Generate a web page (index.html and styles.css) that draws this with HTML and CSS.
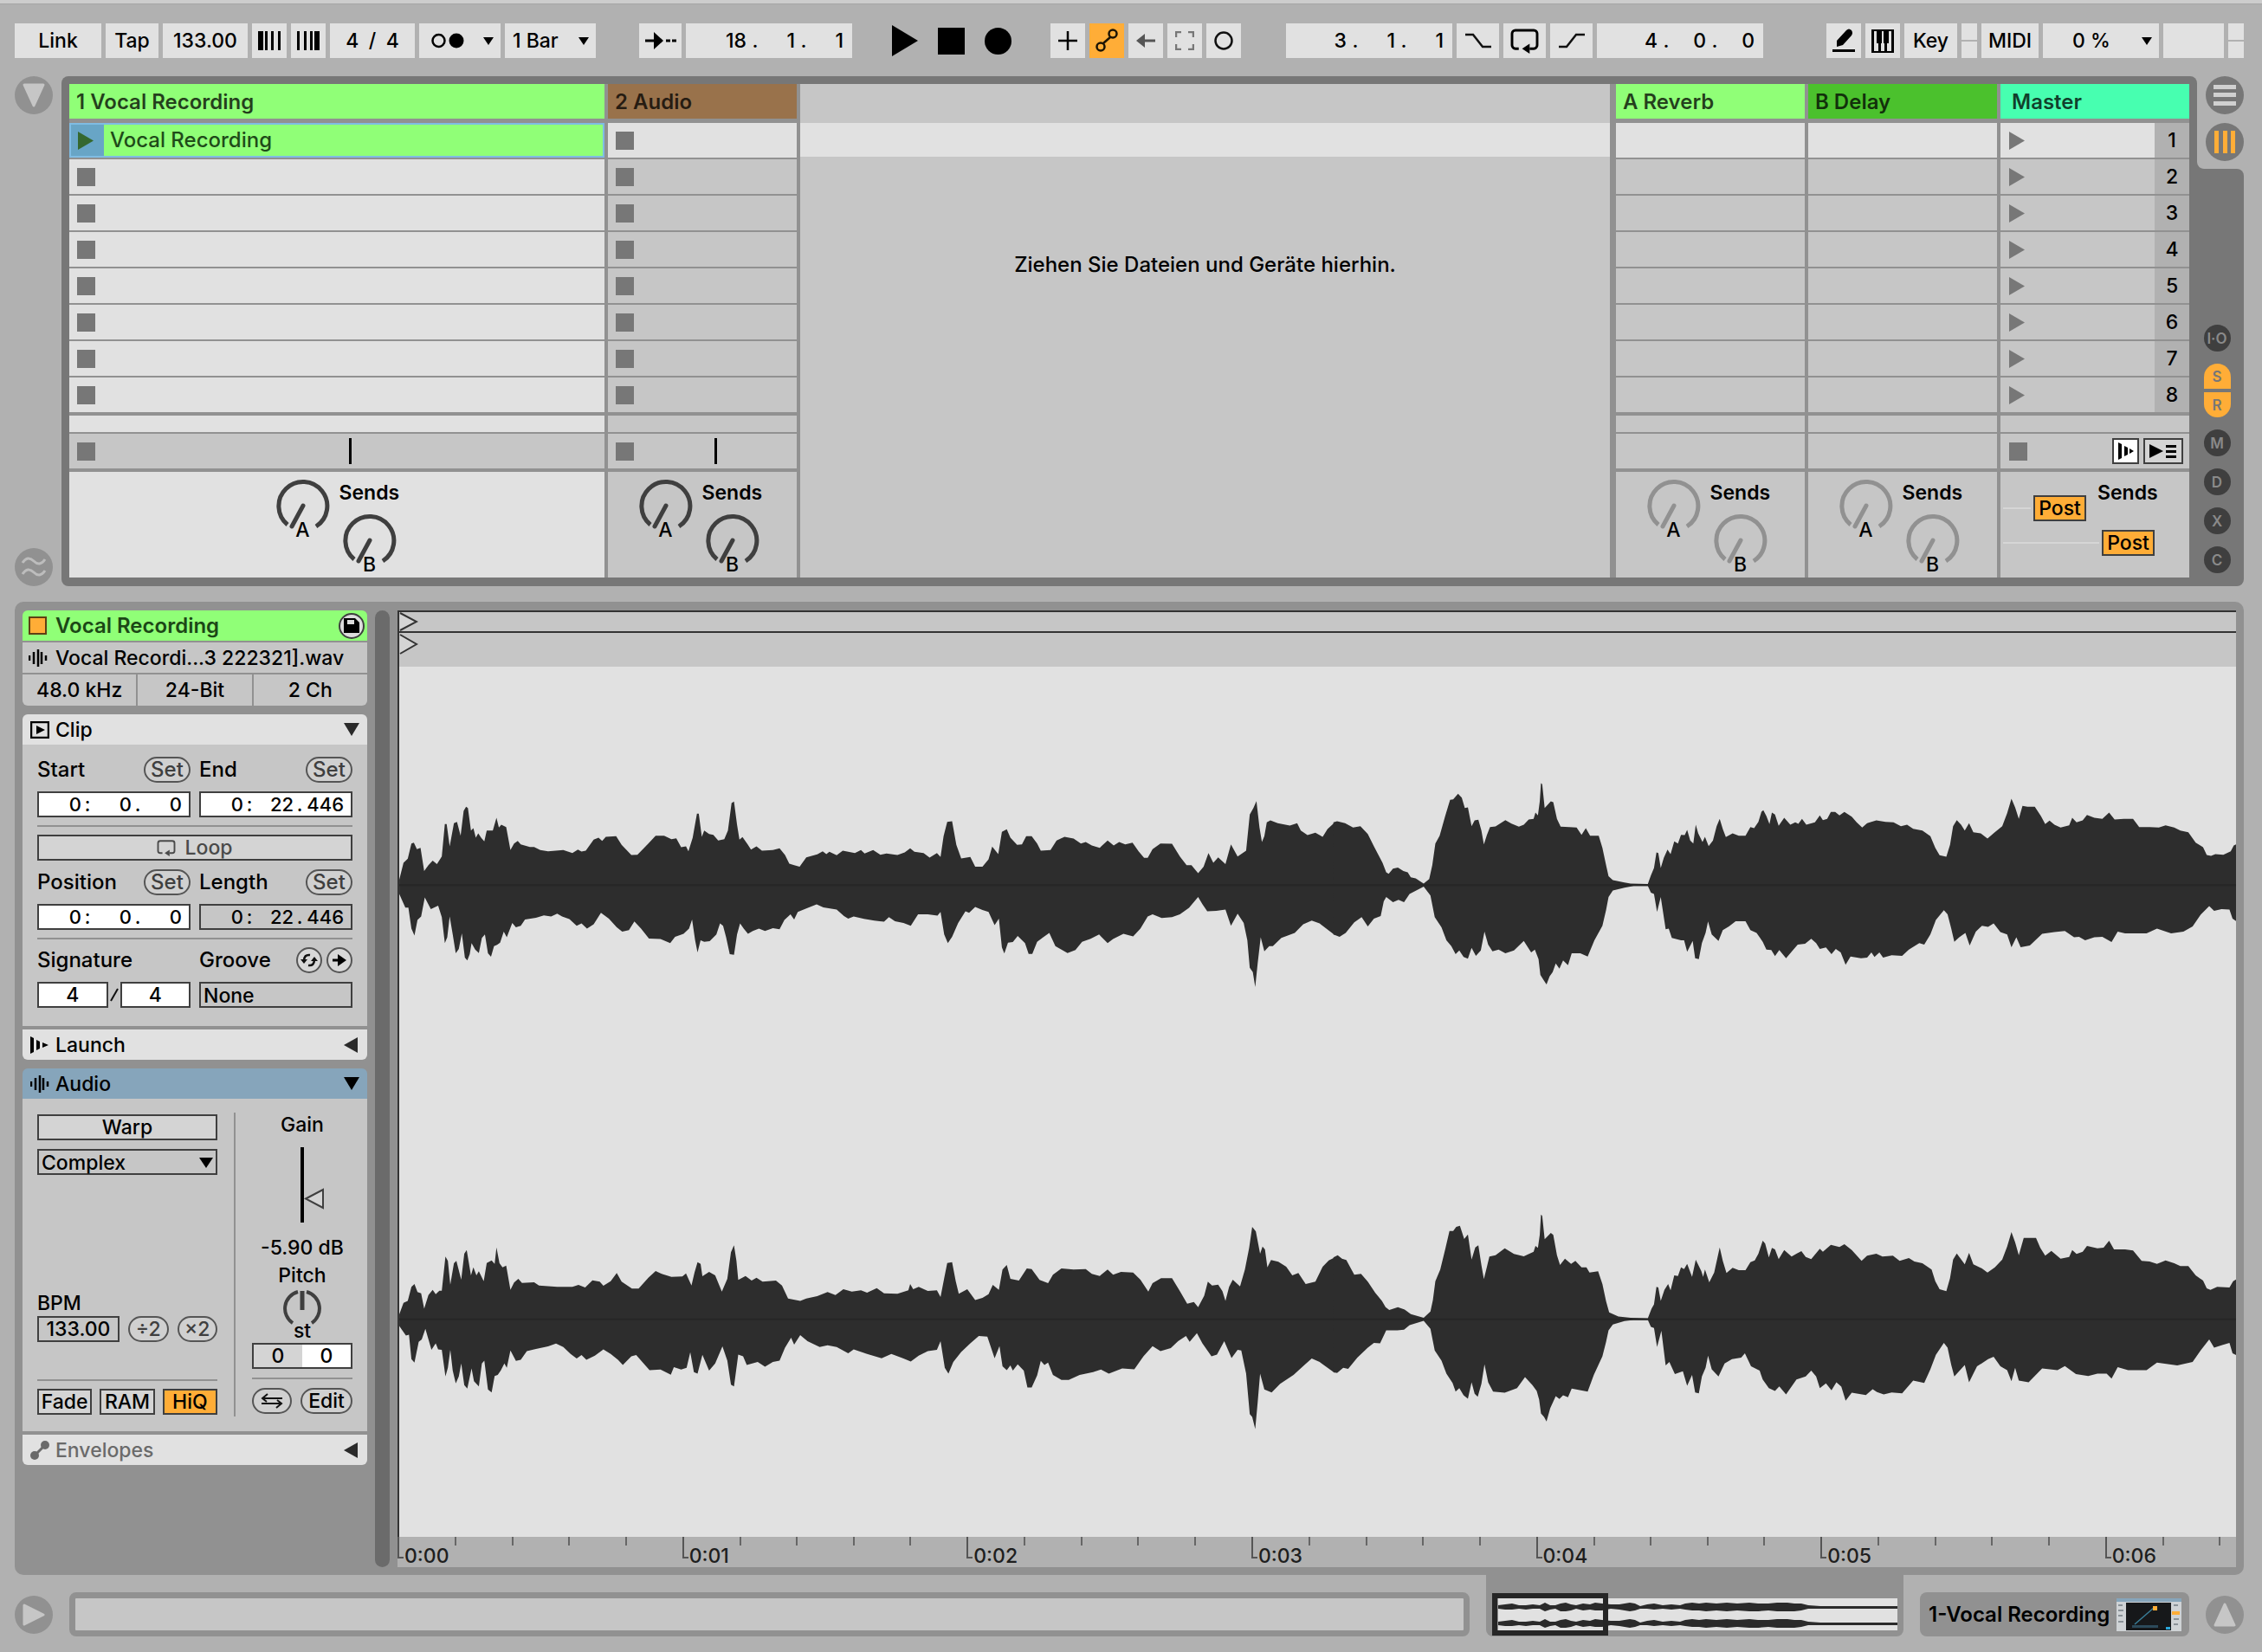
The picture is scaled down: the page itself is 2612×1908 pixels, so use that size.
FILE: index.html
```html
<!DOCTYPE html>
<html lang="de">
<head>
<meta charset="utf-8">
<title>Vocal Recording</title>
<link rel="stylesheet" href="styles.css">
</head>
<body>
<svg class="defs" aria-hidden="true">
  <symbol id="i-play" viewBox="0 0 18 21"><path d="M0 0 18 10.500 0 21z" fill="currentColor"/></symbol>
  <symbol id="i-down" viewBox="0 0 18 15"><path d="M0 0h18L9 15z" fill="currentColor"/></symbol>
  <symbol id="i-left" viewBox="0 0 16 18"><path d="M16 0v18L0 9z" fill="currentColor"/></symbol>
  <symbol id="i-wave" viewBox="0 0 22 22"><path d="M1 8v6M6 4v14M11 1v20M15 4v14M20 8v6" stroke="currentColor" stroke-width="2.500" fill="none"/></symbol>
  <symbol id="i-launch" viewBox="0 0 22 20"><path d="M0 0l4 2v16l-4 2zM7 4l4 2v8l-4 2zM14 7l7 3-7 3z" fill="currentColor"/></symbol>
  <symbol id="i-loop" viewBox="0 0 34 30"><path d="M10 24H6a4 4 0 0 1-4-4V6a4 4 0 0 1 4-4h22a4 4 0 0 1 4 4v14a4 4 0 0 1-4 4h-5" fill="none" stroke="currentColor" stroke-width="3"/><path d="M14 24l9-6v12z" fill="currentColor"/></symbol>
  <symbol id="i-knob" viewBox="0 0 62 58"><path d="M13 53A28 28 0 1 1 46 55" fill="none" stroke="currentColor" stroke-width="5"/><path d="M31 31 18 55" stroke="currentColor" stroke-width="5" stroke-linecap="round"/></symbol>
</svg>

<header class="toolbar">
  <div class="group">
    <button class="w-link">Link</button><button class="w-tap">Tap</button>
    <input class="w-98" value="133.00" aria-label="Tempo">
    <button class="w-40" aria-label="Nudge down"><svg width="26" height="22"><path d="M0 0h6v22H0zM8 0h3v22H8zM15 0h3v22h-3zM23 0h3v22h-3z"/></svg></button>
    <button class="w-40" aria-label="Nudge up"><svg width="26" height="22"><path d="M0 0h3v22H0zM8 0h3v22H8zM15 0h3v22h-3zM20 0h6v22h-6z"/></svg></button>
    <div class="w-98 sig"><input value="4" aria-label="Numerator"><span>/</span><input value="4" aria-label="Denominator"></div>
    <button class="w-94 drop" aria-label="Metronome"><svg width="38" height="18"><circle cx="8.500" cy="9" r="7" fill="none" stroke="#000" stroke-width="2.500"/><circle cx="29" cy="9" r="8.500"/></svg><svg width="12" height="9"><path d="M0 0h12L6 9z"/></svg></button>
    <div class="w-105 select"><select aria-label="Quantization"><option>1 Bar</option></select><svg width="12" height="9"><path d="M0 0h12L6 9z"/></svg></div>
  </div>
  <div class="group g-pos">
    <button class="w-49" aria-label="Follow"><svg width="36" height="20"><path d="M0 10h14M24 10h5M31 10h5" stroke="#000" stroke-width="3"/><path d="M10 0l11 10-11 10z"/></svg></button>
    <div class="time w-192"><input value="18" aria-label="Bar"><span>.</span><input value="1" aria-label="Beat"><span>.</span><input value="1" aria-label="Sixteenth"></div>
  </div>
  <div class="transport">
    <button aria-label="Play"><svg width="30" height="36"><path d="M0 0 30 18 0 36z"/></svg></button>
    <button aria-label="Stop"><svg width="31" height="31"><path d="M0 0h31v31H0z"/></svg></button>
    <button aria-label="Record"><svg width="31" height="31"><circle cx="15.500" cy="15.500" r="15.500"/></svg></button>
  </div>
  <div class="group g-auto">
    <button class="w-40" aria-label="Overdub"><svg width="22" height="22"><path d="M0 11h22M11 0v22" stroke="#000" stroke-width="2.500"/></svg></button>
    <button class="w-40 on" aria-label="Automation arm"><svg width="26" height="28" fill="none" stroke="#1c1404" stroke-width="2.500"><circle cx="6" cy="21" r="4.500"/><circle cx="20" cy="6" r="4.500"/><path d="M9 17 17 10"/></svg></button>
    <button class="w-40 dim" aria-label="Re-enable automation"><svg width="22" height="18"><path d="M8 9h14" stroke="#555" stroke-width="3"/><path d="M0 9 10 1v16z" fill="#555"/></svg></button>
    <button class="w-40" aria-label="Capture"><svg width="22" height="22" fill="none" stroke="#777" stroke-width="2.500"><path d="M1 7V1h6M15 1h6v6M21 15v6h-6M7 21H1v-6"/></svg></button>
    <button class="w-40" aria-label="Session record"><svg width="24" height="24"><circle cx="12" cy="12" r="9.500" fill="none" stroke="#111" stroke-width="2.500"/></svg></button>
  </div>
  <div class="group g-loop">
    <div class="time w-192"><input value="3" aria-label="Loop bar"><span>.</span><input value="1" aria-label="Loop beat"><span>.</span><input value="1" aria-label="Loop sixteenth"></div>
    <button class="w-49" aria-label="Punch in"><svg width="32" height="18"><path d="M1 2h9l11 14h10" fill="none" stroke="#111" stroke-width="2.500"/></svg></button>
    <button class="w-49" aria-label="Loop"><svg width="33" height="29"><use href="#i-loop"/></svg></button>
    <button class="w-49" aria-label="Punch out"><svg width="32" height="18"><path d="M1 16h9L21 2h10" fill="none" stroke="#111" stroke-width="2.500"/></svg></button>
    <div class="time w-192"><input value="4" aria-label="Length bars"><span>.</span><input value="0" aria-label="Length beats"><span>.</span><input value="0" aria-label="Length sixteenths"></div>
  </div>
  <div class="group g-right">
    <button class="w-40" aria-label="Draw mode"><svg width="26" height="28"><path d="M0 24h26v3H0zM5 21V14L16 2q3-3 6 0 2 3 0 6L12 19z"/></svg></button>
    <button class="w-40" aria-label="Computer keyboard"><svg width="26" height="27"><path d="M0 0h26v27H0z"/><path d="M3 2h3v14h2v9H3zM11 16h1V2h2v14h1v9h-4zM20 2h3v23h-5v-9h2z" fill="#e1e1e1"/></svg></button>
    <button class="w-tap">Key</button>
    <div class="leds"><i></i><i></i></div>
    <button class="w-midi">MIDI</button>
    <button class="w-cpu drop"><span>0 %</span><svg width="12" height="9"><path d="M0 0h12L6 9z"/></svg></button>
    <div class="w-70"></div>
    <div class="leds"><i></i><i></i></div>
  </div>
</header>

<main>
<section class="session">
  <div class="side">
    <button class="round" aria-label="Browser"><svg width="26" height="28"><path d="M2 2h22L13 26z" fill="#c6c6c6" stroke="#c6c6c6" stroke-width="3" stroke-linejoin="round"/></svg></button>
    <button class="round" aria-label="Groove pool"><svg width="30" height="28" fill="none" stroke="#bdbdbd" stroke-width="3"><path d="M2 9q6-9 13-2t13-2M2 22q6-9 13-2t13-2"/></svg></button>
  </div>
  <div class="frame">
    <div class="track wide sel">
      <h2 class="c-green">1 Vocal Recording</h2>
      <div class="slots">
        <div class="clip"><button aria-label="Launch clip"><svg width="18" height="21"><use href="#i-play"/></svg></button><span>Vocal Recording</span></div>
        <div><b></b></div><div><b></b></div><div><b></b></div><div><b></b></div><div><b></b></div><div><b></b></div><div><b></b></div>
      </div>
      <div class="thin"></div>
      <div class="stop"><b></b><i></i></div>
      <div class="sends">
        <div class="knob"><svg width="62" height="58"><use href="#i-knob"/></svg><span>A</span></div>
        <div><h3>Sends</h3><div class="knob"><svg width="62" height="58"><use href="#i-knob"/></svg><span>B</span></div></div>
      </div>
    </div>
    <div class="track">
      <h2 class="c-brown">2 Audio</h2>
      <div class="slots">
        <div><b></b></div><div><b></b></div><div><b></b></div><div><b></b></div><div><b></b></div><div><b></b></div><div><b></b></div><div><b></b></div>
      </div>
      <div class="thin"></div>
      <div class="stop"><b></b><i></i></div>
      <div class="sends">
        <div class="knob"><svg width="62" height="58"><use href="#i-knob"/></svg><span>A</span></div>
        <div><h3>Sends</h3><div class="knob"><svg width="62" height="58"><use href="#i-knob"/></svg><span>B</span></div></div>
      </div>
    </div>
    <div class="dropzone"><p>Ziehen Sie Dateien und Geräte hierhin.</p></div>
    <div class="track return">
      <h2 class="c-green">A Reverb</h2>
      <div class="slots"><div></div><div></div><div></div><div></div><div></div><div></div><div></div><div></div></div>
      <div class="thin"></div><div class="stop"></div>
      <div class="sends">
        <div class="knob"><svg width="62" height="58"><use href="#i-knob"/></svg><span>A</span></div>
        <div><h3>Sends</h3><div class="knob"><svg width="62" height="58"><use href="#i-knob"/></svg><span>B</span></div></div>
      </div>
    </div>
    <div class="track return">
      <h2 class="c-forest">B Delay</h2>
      <div class="slots"><div></div><div></div><div></div><div></div><div></div><div></div><div></div><div></div></div>
      <div class="thin"></div><div class="stop"></div>
      <div class="sends">
        <div class="knob"><svg width="62" height="58"><use href="#i-knob"/></svg><span>A</span></div>
        <div><h3>Sends</h3><div class="knob"><svg width="62" height="58"><use href="#i-knob"/></svg><span>B</span></div></div>
      </div>
    </div>
    <div class="track master">
      <h2 class="c-mint">Master</h2>
      <div class="slots">
        <div><svg width="18" height="21"><use href="#i-play"/></svg><span>1</span></div>
        <div><svg width="18" height="21"><use href="#i-play"/></svg><span>2</span></div>
        <div><svg width="18" height="21"><use href="#i-play"/></svg><span>3</span></div>
        <div><svg width="18" height="21"><use href="#i-play"/></svg><span>4</span></div>
        <div><svg width="18" height="21"><use href="#i-play"/></svg><span>5</span></div>
        <div><svg width="18" height="21"><use href="#i-play"/></svg><span>6</span></div>
        <div><svg width="18" height="21"><use href="#i-play"/></svg><span>7</span></div>
        <div><svg width="18" height="21"><use href="#i-play"/></svg><span>8</span></div>
      </div>
      <div class="thin"></div>
      <div class="stop"><b></b>
        <button class="box white" aria-label="Launch"><svg width="18" height="20"><path d="M0 0l4 2v16l-4 2zM7 4l4 2v8l-4 2zM13 7l5 3-5 3z"/></svg></button>
        <button class="box" aria-label="Back to arrangement"><svg width="32" height="16"><path d="M0 0l16 8-16 8zM19 1h12v3H19zM19 7h12v3H19zM19 13h12v3H19z"/></svg></button>
      </div>
      <div class="posts">
        <h3>Sends</h3>
        <div><i></i><button class="box on">Post</button></div>
        <div class="p2"><i></i><button class="box on">Post</button></div>
      </div>
    </div>
  </div>
  <div class="rail">
    <div class="views">
      <button class="round dark" aria-label="Arrangement view"><svg width="26" height="24"><path d="M0 0h26v5H0zM0 9h26v5H0zM0 19h26v5H0z" fill="#d0d0d0"/></svg></button>
      <button class="round dark" aria-label="Session view"><svg width="24" height="26"><path d="M0 0h5v26H0zM10 0h5v26h-5zM19 0h5v26h-5z" fill="#ffad37"/></svg></button>
    </div>
    <div class="toggles">
      <button>I·O</button>
      <div class="pair"><button class="on">S</button><button class="on">R</button></div>
      <button>M</button><button>D</button><button>X</button><button>C</button>
    </div>
  </div>
</section>

<section class="detail">
  <aside>
    <div class="clipbox">
      <h2 class="c-green"><i class="active"></i>Vocal Recording<button class="save" aria-label="Save"><svg width="18" height="17"><path d="M0 0h13l5 5v12H0z"/><path d="M4 2h8v5H4z" fill="#ddd"/></svg></button></h2>
      <p><svg width="22" height="22"><use href="#i-wave"/></svg>Vocal Recordi...3 222321].wav</p>
      <div class="info"><span>48.0 kHz</span><span>24-Bit</span><span>2 Ch</span></div>
    </div>

    <div class="panel">
      <h3><svg width="22" height="20"><path d="M1 1h20v18H1z" fill="none" stroke="#000" stroke-width="2.500"/><path d="M7 5l10 5-10 5z"/></svg>Clip<svg class="fold" width="18" height="15"><use href="#i-down"/></svg></h3>
      <div class="body">
        <div class="two">
          <div class="lab"><span>Start</span><button class="pill">Set</button></div>
          <div class="lab"><span>End</span><button class="pill">Set</button></div>
        </div>
        <div class="two">
          <div class="time field"><input value="0" aria-label="Start min"><span>:</span><input value="0" aria-label="Start s"><span>.</span><input value="0" aria-label="Start ms"></div>
          <div class="time field"><input value="0" aria-label="End min"><span>:</span><input value="22" aria-label="End s"><span>.</span><input value="446" aria-label="End ms"></div>
        </div>
        <hr>
        <button class="box gray"><svg width="22" height="19"><use href="#i-loop"/></svg>Loop</button>
        <div class="two">
          <div class="lab"><span>Position</span><button class="pill">Set</button></div>
          <div class="lab"><span>Length</span><button class="pill">Set</button></div>
        </div>
        <div class="two">
          <div class="time field"><input value="0" aria-label="Position min"><span>:</span><input value="0" aria-label="Position s"><span>.</span><input value="0" aria-label="Position ms"></div>
          <div class="time field off"><input value="0" aria-label="Length min"><span>:</span><input value="22" aria-label="Length s"><span>.</span><input value="446" aria-label="Length ms"></div>
        </div>
        <hr>
        <div class="two">
          <div class="lab"><span>Signature</span></div>
          <div class="lab"><span>Groove</span>
            <button class="dot" aria-label="Hot-swap groove"><svg width="20" height="16" fill="none" stroke="#111" stroke-width="2.500"><path d="M11 2Q4 1 4 9M9 14q7 1 7-7"/><path d="M0 7h8l-4 5zM12 9h8l-4-5z" fill="#111" stroke="none"/></svg></button>
            <button class="dot" aria-label="Commit groove"><svg width="16" height="14"><path d="M0 7h8" stroke="#000" stroke-width="3"/><path d="M6 0l10 7-10 7z"/></svg></button>
          </div>
        </div>
        <div class="two">
          <div class="sigrow"><input value="4" aria-label="Signature numerator"><svg width="10" height="16"><path d="M1 15 9 1" stroke="#111" stroke-width="2"/></svg><input value="4" aria-label="Signature denominator"></div>
          <div class="select field off"><select aria-label="Groove"><option>None</option></select></div>
        </div>
      </div>
      <h3 class="last"><svg width="22" height="20"><use href="#i-launch"/></svg>Launch<svg class="fold" width="16" height="18"><use href="#i-left"/></svg></h3>
    </div>

    <div class="panel">
      <h3 class="blue"><svg width="22" height="22"><use href="#i-wave"/></svg>Audio<svg class="fold" width="18" height="15"><use href="#i-down"/></svg></h3>
      <div class="audio">
        <div class="warp">
          <button class="box gray dk">Warp</button>
          <div class="select field off"><select aria-label="Warp mode"><option>Complex</option></select><svg width="16" height="12"><path d="M0 0h16L8 12z"/></svg></div>
          <label class="bpm" for="bpm">BPM</label>
          <div class="bpmrow"><input id="bpm" value="133.00"><button class="pill">÷2</button><button class="pill">×2</button></div>
          <hr>
          <div class="three"><button class="box gray dk">Fade</button><button class="box gray dk">RAM</button><button class="box on">HiQ</button></div>
        </div>
        <div class="gain">
          <label for="gain">Gain</label>
          <input id="gain" type="range" min="0" max="100" value="24">
          <output>-5.90 dB</output>
          <span class="pitch">Pitch</span>
          <svg width="46" height="44" fill="none" stroke="#3f3f3f"><path d="M18 3A20 20 0 0 0 12 39M28 3A20 20 0 0 1 34 39" stroke-width="4"/><path d="M23 2v22" stroke-width="5"/></svg>
          <span class="st">st</span>
          <div class="semis"><input value="0" aria-label="Semitones"><input value="0" aria-label="Cents"></div>
          <hr>
          <div class="rev"><button class="pill" aria-label="Reverse"><svg width="26" height="18" fill="none" stroke="#111" stroke-width="2"><path d="M25 6H2M8 1 2 6l5 4M1 12h23M18 17l6-5-5-4"/></svg></button><button class="pill dk">Edit</button></div>
        </div>
      </div>
      <h3 class="last dim"><svg width="22" height="22"><path d="M4 18 18 4" stroke="currentColor" stroke-width="3"/><circle cx="5" cy="17" r="5" fill="currentColor"/><circle cx="17" cy="5" r="5" fill="currentColor"/></svg>Envelopes<svg class="fold" width="16" height="18"><use href="#i-left"/></svg></h3>
    </div>
  </aside>
  <div class="scroll"></div>
  <div class="editor">
    <div class="lane"><svg width="22" height="22"><path d="M1 1 20 11 1 21" fill="#d4d4d4" stroke="#333" stroke-width="2"/></svg></div>
    <div class="lane l2"><svg width="22" height="24"><path d="M1 1 20 12 1 23" fill="#d4d4d4" stroke="#333" stroke-width="2"/></svg></div>
    <div class="canvas">
    <svg viewBox="0 0 2121 1004" preserveAspectRatio="none" fill="#2d2d2d" role="img" aria-label="Waveform">
      <g transform="translate(-21 89) scale(.7015 .3333)"><path d="M30 489L30,470 37,412 44,398 50,345 54,342 59,365 65,360 71,440 78,420 85,404 92,416 100,390 105,278 108,278 113,355 120,275 125,270 131,318 136,232 140,218 143,222 148,300 152,292 156,325 160,310 165,326 170,338 174,300 184,300 190,256 194,290 198,280 206,288 213,368 219,345 225,336 230,348 245,357 252,357 262,368 275,372 300,368 315,378 324,366 330,373 337,370 350,332 358,325 364,336 370,322 387,320 396,350 412,385 422,384 440,345 452,318 466,318 478,330 486,327 494,358 502,355 506,372 513,325 520,242 523,242 528,322 532,300 540,312 547,315 555,335 565,330 571,300 577,205 581,200 586,280 590,332 595,323 604,350 609,366 618,355 627,370 645,368 656,362 665,385 672,415 680,420 689,425 700,393 718,383 727,372 733,382 738,374 750,386 760,370 780,378 790,368 796,380 810,368 822,384 832,380 850,385 862,376 871,362 878,374 893,378 903,394 915,378 921,392 926,320 932,270 940,268 947,350 955,397 970,392 978,425 990,425 1000,400 1006,356 1016,382 1022,305 1030,296 1036,325 1047,350 1055,348 1062,320 1071,320 1080,345 1086,370 1102,368 1112,335 1125,322 1140,328 1152,345 1160,340 1170,352 1183,360 1196,335 1206,352 1215,340 1225,348 1237,342 1247,372 1256,395 1262,395 1270,365 1283,345 1302,346 1315,390 1326,420 1334,420 1345,448 1354,425 1362,378 1370,412 1378,393 1390,416 1399,348 1410,390 1424,370 1430,245 1436,222 1441,198 1446,290 1450,340 1454,320 1458,272 1464,265 1476,275 1496,283 1508,275 1514,300 1525,316 1538,308 1550,322 1558,295 1570,272V489zM30 489L30,520 40,567 45,567 50,640 55,664 60,610 66,598 72,532 82,572 94,560 100,600 105,690 109,670 113,598 118,660 123,725 128,710 133,656 138,740 142,750 146,728 149,690 155,712 161,724 166,672 171,660 176,725 181,737 186,700 191,696 196,688 202,650 207,670 216,620 222,635 230,630 237,608 255,602 268,594 280,598 290,588 298,598 310,607 322,630 330,622 339,640 350,625 362,585 375,605 388,635 397,650 408,645 417,615 428,640 441,674 460,676 476,690 484,668 498,658 507,640 512,608 517,680 521,722 526,680 532,685 541,683 552,660 558,622 563,630 568,670 574,728 581,730 586,660 591,622 597,640 604,658 612,648 622,640 632,648 645,638 656,642 664,610 674,590 680,608 686,582 700,570 717,556 728,566 750,574 762,596 769,605 778,598 795,606 812,612 828,616 836,600 846,614 860,620 872,630 884,590 900,590 916,595 921,582 927,660 933,690 940,668 950,620 962,580 968,585 978,565 990,575 1000,582 1010,628 1017,605 1022,705 1026,726 1032,688 1040,686 1048,665 1060,690 1066,727 1072,727 1080,685 1090,670 1100,655 1110,700 1130,724 1143,714 1154,685 1168,675 1182,660 1196,690 1205,676 1222,658 1238,667 1250,640 1262,598 1270,590 1285,603 1302,600 1315,590 1330,568 1345,530 1352,555 1360,580 1375,578 1390,574 1399,630 1410,588 1420,620 1426,680 1430,775 1435,790 1439,842 1443,760 1448,670 1454,718 1462,700 1468,700 1482,672 1504,655 1518,625 1532,612 1545,622 1570,662V489z"/></g>
      <g transform="translate(1039 89) scale(.7092 .3333)"><path d="M56 489L56,272 62,268 75,275 88,290 100,285 112,312 122,355 136,412 142,445 146,450 153,432 161,428 170,440 177,445 182,462 190,466 203,484 212,468 217,420 222,345 229,318 238,250 246,194 251,192 259,173 265,186 270,222 275,220 281,285 286,265 292,263 297,300 301,348 306,315 311,288 320,286 336,264 346,276 358,287 366,280 374,262 382,260 385,238 389,248 392,200 394,136 396,140 400,222 410,199 414,202 420,260 426,287 440,288 452,290 460,315 467,292 474,318 488,318 494,360 500,420 504,458 511,472 530,480 540,484 568,485 573,455 578,430 582,376 585,378 589,430 594,395 600,366 605,382 611,338 617,345 622,315 628,316 632,298 637,335 642,345 646,280 650,310 657,340 661,322 667,354 674,335 680,285 685,260 690,295 695,323 706,310 716,318 727,318 735,288 741,292 748,270 753,235 756,230 761,250 766,278 770,238 775,245 781,284 790,256 800,280 808,272 813,277 819,260 826,280 840,272 848,248 853,264 860,260 866,236 873,236 880,248 888,236 900,252 908,272 917,290 925,275 940,265 955,270 968,272 980,285 990,280 1000,294 1015,300 1028,320 1036,360 1043,386 1054,391 1060,350 1065,285 1071,264 1078,280 1084,300 1091,275 1098,306 1110,310 1121,328 1132,308 1145,285 1153,240 1160,190 1166,220 1172,260 1178,215 1186,218 1198,218 1208,250 1215,278 1222,266 1230,280 1240,290 1254,282 1259,256 1266,272 1276,265 1283,246 1295,256 1308,260 1319,238 1328,262 1343,260 1358,260 1368,288 1385,288 1400,290 1411,282 1425,290 1435,300 1448,306 1460,342 1472,358 1478,385 1485,388 1492,382 1505,384 1517,372 1522,352 1526,348V489zM56 489L56,660 66,668 76,655 90,618 102,600 112,632 122,605 133,596 138,545 142,530 153,548 162,540 171,548 180,520 203,494 214,525 221,600 232,635 240,680 248,700 255,728 261,715 268,738 275,744 281,706 288,734 296,715 302,650 308,695 315,718 325,712 336,725 350,715 366,682 378,722 384,712 390,745 393,800 399,820 403,833 408,805 413,790 418,760 424,778 430,750 438,766 444,725 458,725 470,736 481,680 494,630 500,575 504,530 511,508 530,498 545,492 568,492 573,515 578,520 583,582 589,530 597,642 602,640 607,672 622,680 627,680 632,720 641,682 645,742 651,745 656,690 662,655 666,615 672,660 683,682 690,645 700,632 711,614 727,614 735,645 745,655 755,685 761,712 769,714 775,735 782,714 793,742 805,712 812,695 824,692 834,675 842,690 848,710 858,705 867,728 874,710 882,722 890,765 898,736 915,742 925,740 932,722 937,738 945,722 951,740 965,732 982,734 993,712 1010,690 1018,695 1028,660 1037,610 1050,576 1056,590 1062,640 1067,685 1075,670 1085,655 1092,698 1102,650 1112,630 1122,634 1131,622 1142,652 1153,660 1160,704 1168,670 1175,704 1190,698 1210,658 1230,652 1247,648 1262,670 1270,668 1280,680 1295,670 1308,668 1323,686 1333,650 1345,656 1380,656 1397,640 1420,656 1440,650 1455,632 1468,592 1482,562 1490,578 1502,572 1515,574 1520,605 1526,614V489z"/></g>
      <g transform="translate(-21 589) scale(.7015 .3333)"><path d="M30 492L30,475 37,435 44,428 50,380 55,370 60,398 66,402 71,455 78,408 85,390 90,405 96,393 100,393 106,275 110,290 114,372 120,298 124,290 132,355 137,265 141,252 148,340 152,312 157,340 161,326 169,360 174,297 182,288 187,300 190,243 195,298 200,312 206,306 213,390 219,365 226,352 232,366 252,364 260,375 290,380 315,380 325,373 336,382 348,357 360,362 366,376 378,360 388,332 396,362 413,386 424,386 440,348 452,325 462,335 478,345 496,344 502,333 511,375 516,330 521,294 526,300 529,343 540,328 550,340 561,396 570,352 576,260 581,236 585,290 588,356 600,342 610,358 618,348 628,362 650,358 660,375 670,420 690,428 700,420 718,412 735,398 748,408 761,388 775,396 790,392 800,400 816,384 828,402 850,404 868,392 871,370 876,388 885,380 900,394 915,392 921,415 927,350 932,297 940,294 946,360 951,404 965,388 978,425 990,418 1000,405 1007,373 1017,390 1023,320 1030,304 1036,352 1050,358 1063,316 1071,318 1084,356 1098,367 1106,338 1120,316 1140,320 1160,318 1170,335 1183,342 1196,320 1205,338 1218,328 1238,330 1250,355 1263,396 1270,367 1284,350 1302,350 1315,395 1327,438 1338,432 1345,450 1355,410 1361,362 1368,375 1378,372 1385,395 1390,428 1396,380 1402,355 1414,378 1422,320 1429,245 1434,172 1440,188 1447,265 1451,240 1455,250 1459,312 1465,287 1477,293 1490,310 1500,340 1510,332 1522,370 1538,362 1550,310 1560,288 1570,278V492zM30 492L30,515 41,548 46,545 50,630 55,642 62,570 67,562 73,525 83,598 90,575 94,596 100,598 106,690 110,660 114,598 118,670 123,714 128,690 132,645 137,720 142,732 149,662 153,706 161,724 166,645 170,635 176,735 182,745 187,688 192,685 197,670 203,645 207,660 213,600 222,636 230,632 240,602 255,595 275,586 288,576 300,588 312,612 322,628 330,616 338,632 352,618 366,596 378,612 390,632 398,650 412,620 420,616 430,640 442,668 460,666 477,684 482,658 494,666 503,660 509,606 515,675 521,680 529,615 540,670 550,645 562,586 570,635 576,718 581,724 588,614 596,620 602,650 620,640 632,656 645,640 656,635 665,590 675,556 680,580 690,547 702,568 722,588 735,582 750,588 769,610 778,596 800,612 824,627 840,612 860,628 872,638 885,618 900,602 915,598 921,568 928,660 934,680 942,640 955,605 970,575 984,550 998,552 1010,627 1018,585 1023,655 1030,668 1036,652 1040,670 1048,648 1058,670 1064,728 1071,728 1080,686 1086,636 1092,650 1098,642 1106,685 1120,702 1132,702 1150,685 1172,675 1185,666 1198,680 1220,662 1240,665 1255,620 1270,585 1283,602 1300,592 1312,568 1325,550 1331,570 1343,540 1352,575 1367,620 1376,614 1388,568 1400,626 1410,598 1416,600 1424,680 1430,820 1434,830 1439,872 1443,780 1447,680 1454,735 1466,745 1480,715 1502,685 1520,650 1532,628 1545,640 1570,678V492z"/></g>
      <g transform="translate(1039 589) scale(.7092 .3333)"><path d="M56 492L56,278 63,270 70,282 77,287 90,338 101,335 112,362 124,400 135,428 141,450 147,460 161,450 172,458 182,474 203,487 214,465 218,425 222,360 230,320 238,250 245,186 251,186 256,172 262,168 269,214 275,198 281,285 287,243 292,236 297,305 301,353 306,310 310,275 320,270 335,246 350,266 366,274 382,258 385,238 389,245 392,200 394,129 396,134 400,215 410,193 414,200 420,270 425,304 433,282 443,300 450,290 460,312 468,312 473,330 487,326 494,370 500,430 505,468 520,482 540,487 568,488 574,455 578,440 582,380 585,382 589,428 595,390 601,370 605,392 611,340 617,342 622,312 627,318 632,300 640,345 646,286 655,325 658,345 661,320 668,364 676,330 685,243 690,290 696,332 706,314 716,322 727,322 735,294 742,288 748,265 755,220 759,230 765,278 770,245 775,250 781,284 790,252 802,275 810,265 818,256 825,276 834,284 848,248 853,258 866,234 880,242 888,232 900,252 916,290 925,272 940,265 950,275 967,272 978,290 993,280 1002,292 1015,298 1030,320 1036,360 1043,388 1054,395 1060,350 1065,285 1071,264 1084,302 1091,262 1098,302 1112,316 1121,330 1133,312 1145,285 1153,240 1160,190 1166,225 1172,270 1180,210 1200,210 1207,245 1215,272 1225,255 1240,282 1254,276 1259,252 1266,266 1276,258 1283,238 1300,246 1310,244 1319,220 1327,250 1345,250 1358,254 1372,290 1385,292 1397,300 1411,288 1425,298 1435,308 1448,308 1460,340 1472,358 1478,385 1484,390 1495,380 1515,382 1521,360 1526,354V492zM56 492L56,675 62,678 72,660 80,664 95,625 112,590 122,574 132,575 142,530 160,530 171,528 180,512 203,497 214,525 221,600 232,635 240,680 250,712 255,742 261,730 268,755 275,767 281,710 286,750 291,760 297,715 302,648 308,710 316,742 335,746 355,730 368,692 380,720 387,740 391,770 394,818 399,830 403,846 409,800 418,758 424,768 430,755 438,762 444,732 470,742 480,685 494,620 500,570 504,530 511,510 530,498 545,494 568,494 573,518 578,522 583,588 590,532 597,652 603,640 612,682 625,672 632,722 640,685 645,745 651,748 656,690 662,660 666,618 672,665 683,690 693,645 705,630 720,625 726,610 736,655 750,670 755,700 765,730 775,740 782,724 793,752 810,700 825,690 834,670 842,690 848,730 858,714 867,738 875,710 883,725 890,774 900,746 923,754 934,734 941,744 952,752 965,745 982,748 1000,704 1018,712 1028,665 1037,615 1050,574 1056,590 1062,650 1067,690 1084,650 1091,710 1104,655 1122,630 1131,622 1142,655 1153,668 1160,706 1166,660 1172,704 1188,710 1210,662 1235,668 1247,654 1265,682 1285,688 1300,680 1315,680 1323,697 1333,658 1350,668 1380,668 1397,642 1430,652 1455,640 1468,600 1482,562 1490,590 1502,582 1515,574 1520,610 1526,616V492z"/></g>
      <path d="M0 251h2121v2H0zM0 752h2121v2H0z" fill="#262626"/>
    </svg>
    </div>
    <div class="ruler"><span>0:00</span><span>0:01</span><span>0:02</span><span>0:03</span><span>0:04</span><span>0:05</span><span>0:06</span></div>
  </div>
</section>
</main>

<footer>
  <div class="cell"><button class="round" aria-label="Info"><svg width="28" height="26"><path d="M3 2 25 13 3 24z" fill="#c6c6c6" stroke="#c6c6c6" stroke-width="3" stroke-linejoin="round"/></svg></button></div>
  <div class="status"></div>
  <div class="overview">
    <svg viewBox="0 0 461 37" preserveAspectRatio="none" role="img" aria-label="Clip overview"><path d="M0 0h461v37H0z" fill="#e1e1e1"/>
      <g id="ov" fill="#2a2a2a"><path d="M0 8L8 7 16 6 24 8 32 8 40 7 48 8 54 5 60 8 66 8 72 6 78 5 84 7 90 8 98 6 106 7 112 5 120 6 130 7 140 7 146 6 152 5 158 6 164 9 172 7 180 6 190 8 200 7 210 8 216 6 224 5 232 6 240 5 252 6 264 5 276 6 290 5 300 6 312 6 322 5 334 5 342 6 350 6 358 8 372 9H461V12H372L358 12 350 14 342 15 334 15 322 15 312 14 300 15 290 15 276 14 264 15 252 14 240 15 232 14 224 14 216 13 210 12 200 13 190 12 180 13 172 12 164 12 158 14 152 15 146 14 140 13 130 12 120 14 112 14 106 13 98 14 90 12 84 14 78 15 72 15 66 12 60 13 54 15 48 12 40 12 32 13 24 12 16 13 8 13 0 12z"/></g>
      <use href="#ov" y="19"/>
      <path d="M-4-3h128v43H-4z" fill="none" stroke="#262626" stroke-width="6"/>
    </svg>
  </div>
  <div class="device"><span>1-Vocal Recording</span>
    <svg width="75" height="38"><path d="M0 0h75v38H0z" fill="#cfd3d6"/><path d="M0 0h75v4H0z" fill="#86a5bb"/><path d="M11 5h52v32H11z" fill="#16181a"/><path d="M21 30 43 11" stroke="#3a7f9a" stroke-width="1.500"/><path d="M42 9h5v5h-5zM64 15h9v4h-9z" fill="#ffad37"/><path d="M18 31h30v3H18z" fill="#2c4a5a"/><path d="M57 33h5v3h-5z" fill="#2aa5d8"/><path d="M2 8h5M2 14h6M2 20h5M2 27h6M66 8h5M66 24h6M66 30h5" stroke="#8a9298" stroke-width="2"/></svg>
  </div>
  <div class="cell"><button class="round" aria-label="Show devices"><svg width="26" height="28"><path d="M13 2 24 26H2z" fill="#c6c6c6" stroke="#c6c6c6" stroke-width="3" stroke-linejoin="round"/></svg></button></div>
</footer>
</body>
</html>
```
FILE: styles.css
```css
* { box-sizing: border-box; margin: 0; }
:root {
  --bg: #b1b1b1;
  --line: #919191;
  --panel: #c6c6c6;
  --light: #e1e1e1;
  --frame: #777;
  --ink: #3f3f3f;
  --orange: #ffad37;
}
body {
  min-height: 100vh;
  display: flex;
  flex-direction: column;
  padding-bottom: 18px;
  background: var(--bg);
  border-top: 4px solid #cdcdcd;
  color: #000;
  font: 500 23px/28px Inter, "Liberation Sans", sans-serif;
}
.defs { position: absolute; width: 0; height: 0; }
svg { display: block; flex: none; }
button, input, select {
  font: inherit;
  color: inherit;
  border: 0;
  border-radius: 0;
  padding: 0;
  background: none;
  min-width: 0;
  appearance: none;
}
button { display: flex; align-items: center; justify-content: center; white-space: nowrap; }
h2, h3 { font: inherit; }

/* Control bar */
.toolbar {
  display: flex;
  border-top: 1px solid #a6a6a6;
  padding: 22px 21px 21px 17px;
}
.group { display: flex; gap: 5px; height: 40px; }
.group > * { background: var(--light); }
.g-pos { margin-left: 50px; }
.g-auto { margin-left: 45px; }
.g-loop { margin-left: 52px; }
.g-right { margin-left: auto; }
.transport { display: flex; align-items: center; gap: 23px; margin-left: 46px; }
.w-link { width: 100px; }
.w-tap { width: 61px; }
.w-98 { width: 98px; text-align: center; }
.w-40 { width: 40px; }
.w-94 { width: 94px; }
.w-105 { width: 105px; }
.w-49 { width: 49px; }
.w-192 { width: 192px; }
.w-midi { width: 66px; }
.w-cpu { width: 134px; }
.w-cpu.drop { padding-left: 34px; }
.w-70 { width: 70px; }
.group > .on, .on { background: var(--orange); }
.drop { justify-content: space-between; padding: 0 8px 0 14px; }
.select { display: grid; align-items: center; }
.select > * { grid-area: 1 / 1; }
.select select { padding-left: 9px; width: 100%; height: 100%; }
.select svg { justify-self: end; margin-right: 8px; pointer-events: none; }
.sig { display: flex; align-items: center; justify-content: center; gap: 10px; }
.sig input { width: 18px; text-align: center; }
.leds { display: grid; gap: 2px; width: 18px; }
.group > .leds { background: none; }
.leds i { background: var(--light); }
.time { display: flex; align-items: center; padding-right: 10px; }
.time input { width: 36px; text-align: right; }
.time input:first-child { flex: 1; }
.time span { width: 20px; text-align: center; }

/* Round buttons */
.round { width: 44px; height: 44px; border-radius: 50%; background: var(--line); }
.round.dark { background: var(--frame); }

/* Session view */
.session { display: flex; padding: 0 21px 0 17px; }
.side { display: flex; flex-direction: column; justify-content: space-between; margin-right: 10px; }
.frame {
  flex: 1;
  display: flex;
  gap: 4px;
  padding: 9px 0 10px;
  border: solid var(--frame);
  border-width: 0 9px;
  border-radius: 8px 8px 0 8px;
  background: linear-gradient(var(--frame) 9px, var(--line) 9px calc(100% - 10px), var(--frame) calc(100% - 10px));
}
.track { width: 218px; display: flex; flex-direction: column; }
.track.wide { width: 618px; }
.track h2 {
  height: 40px;
  margin-bottom: 5px;
  padding: 0 8px;
  font-size: 24px;
  font-weight: 600;
  line-height: 41px;
  color: rgba(0, 0, 0, .75);
}
.track.master h2 { padding-left: 13px; }
.c-green { background: #90ff77; }
.c-brown { background: #99724b; }
.c-forest { background: #4bc12d; }
.c-mint { background: #47ffb0; }
.slots { display: grid; gap: 2px; margin-bottom: 4px; }
.slots > div { height: 40px; display: flex; align-items: center; background: var(--panel); padding-left: 9px; }
.slots > div:first-child, .sel .slots > div { background: var(--light); }
.track b { width: 21px; height: 21px; background: var(--frame); }
.slots > .clip { padding: 0; border: 2px solid #7fbce3; }
.sel .slots > .clip { background: #90ff77; }
.clip button { width: 38px; height: 100%; background: #68a5c6; color: #35682f; padding-right: 5px; }
.clip span { margin-left: 7px; color: #1f4b19; font-size: 24px; }
.thin { height: 19px; background: var(--panel); margin-bottom: 2px; }
.sel .thin { background: var(--light); }
.stop { height: 40px; display: flex; align-items: center; padding-left: 9px; background: var(--panel); margin-bottom: 4px; }
.stop i { width: 3px; height: 30px; background: #000; margin: 0 auto; }
.stop b + i { border-left: 0; }
.sends { height: 122px; display: flex; justify-content: center; gap: 15px; padding: 8px 8px 0 0; background: var(--panel); color: var(--ink); }
.sel .sends { background: var(--light); padding-right: 2px; }
.return .sends { color: var(--line); }
.sends h3, .sends span { color: #000; }
.sends h3, .posts h3 { font-weight: 600; }
.sends h3 { margin: 2px -4px 10px; height: 28px; }
.knob { width: 62px; height: 72px; display: grid; justify-items: center; }
.knob > * { grid-area: 1 / 1; }
.knob span { align-self: end; line-height: 26px; }
.dropzone {
  flex: 1;
  margin-right: 3px;
  padding-top: 197px;
  text-align: center;
  background: linear-gradient(var(--panel) 45px, var(--light) 45px 84px, var(--panel) 84px);
}
.dropzone p { line-height: 24px; font-size: 24px; }
.master .slots > div { justify-content: space-between; padding-left: 10px; color: var(--frame); }
.master .slots span { width: 40px; height: 100%; background: var(--bg); color: #000; text-align: center; line-height: 41px; }
.box { height: 30px; border: 2px solid var(--ink); background: #d4d4d4; }
.master .stop { gap: 5px; padding: 0 7px 0 10px; }
.master .stop b { margin-right: auto; }
.master .stop .box { width: 46px; }
.master .stop .white { width: 31px; background: #fff; }
.posts { height: 122px; padding: 10px 0 0 3px; background: var(--panel); }
.posts h3 { padding-left: 109px; height: 17px; }
.posts div { display: flex; align-items: center; gap: 3px; margin-bottom: 10px; }
.posts i { width: 32px; height: 2px; background: #d6d6d6; }
.posts .p2 i { width: 111px; }
.posts .box, .three .on { background: var(--orange); }
.posts .box { width: 61px; }

.rail { width: 54px; display: flex; flex-direction: column; background: linear-gradient(90deg, var(--frame) 10px, transparent 10px); }
.views { display: grid; gap: 10px; padding: 0 0 9px 10px; background: var(--bg); border-bottom-left-radius: 8px; }
.toggles {
  flex: 1;
  display: flex;
  flex-direction: column;
  align-items: center;
  justify-content: flex-end;
  gap: 14px;
  padding: 0 8px 15px 0;
  background: var(--frame);
  border-radius: 0 8px 8px 0;
}
.toggles button { width: 31px; height: 31px; border-radius: 50%; background: var(--ink); color: #8a8a8a; font-size: 17px; font-weight: 600; }
.pair { display: grid; gap: 4px; }
.toggles .pair button { height: 29px; background: var(--orange); color: #777; border-radius: 16px 16px 0 0; }
.toggles .pair button:last-child { border-radius: 0 0 16px 16px; }

/* Clip detail view */
main { flex: 1; display: flex; flex-direction: column; gap: 18px; }
.detail {
  flex: 1;
  display: flex;
  gap: 9px;
  margin: 0 21px 0 17px;
  padding: 10px 9px 9px;
  background: var(--line);
  border-radius: 10px;
}
aside { width: 398px; display: grid; gap: 10px; align-content: start; }
.clipbox, .panel { border-radius: 6px; overflow: hidden; }
.clipbox { display: grid; gap: 2px; }
.clipbox h2 { display: flex; align-items: center; height: 35px; padding: 0 3px 0 7px; font-size: 24px; font-weight: 600; color: #1c4716; }
.active { width: 21px; height: 21px; border: 2px solid #5e3f14; background: var(--orange); margin-right: 10px; }
.save { width: 30px; height: 30px; border: 2px solid var(--ink); border-radius: 50%; background: #ddd; margin-left: auto; }
.clipbox p { display: flex; align-items: center; gap: 9px; height: 35px; padding-left: 7px; background: var(--panel); white-space: nowrap; }
.info { display: grid; grid-template-columns: repeat(3, 1fr); gap: 2px; height: 36px; text-align: center; line-height: 36px; }
.info span { background: var(--panel); }
.panel h3 { display: flex; align-items: center; gap: 7px; height: 35px; padding: 0 9px; background: var(--light); }
.panel h3.last { margin-top: 4px; }
.panel h3 .fold { margin-left: auto; color: #2a2a2a; }
.panel h3.last .fold { margin-right: 2px; }
.panel h3.blue { background: #86a5bb; }
.panel h3.blue .fold { color: #000; }
.panel h3.dim { color: #6a6a6a; }
.body { display: grid; gap: 10px; padding: 14px 17px 21px; background: var(--panel); }
.two { display: grid; grid-template-columns: 1fr 1fr; gap: 10px; height: 30px; }
.lab { display: flex; align-items: center; gap: 5px; font-size: 24px; }
.lab span { margin-right: auto; }
.pill { height: 30px; border: 2px solid #555; border-radius: 15px; background: #d0d0d0; color: var(--ink); }
.lab .pill { width: 54px; }
.dk, .pill.dk { color: #000; }
.dot { width: 30px; height: 30px; border: 2px solid #555; border-radius: 50%; background: #d8d8d8; }
.field { height: 30px; border: 2px solid var(--ink); background: #fff; }
.field.time { padding-right: 8px; font-size: 22px; }
.field.time input { width: 44px; }
.field.time span { width: 14px; }
.field.off { background: var(--panel); }
.field select { padding-left: 3px; }
.field svg { margin-right: 3px; }
hr { border: 0; height: 2px; margin: -1px 0; background: var(--line); }
.gray { color: #4a4a4a; gap: 10px; }
.gray.dk { color: #000; }
.sigrow { display: grid; grid-template-columns: 1fr 10px 1fr; gap: 2px; align-items: center; }
.sigrow input, .bpmrow input { height: 30px; border: 2px solid var(--ink); background: #fff; text-align: center; width: 100%; }
.audio { display: flex; padding: 16px 17px 17px; background: var(--panel); height: 384px; }
.warp { width: 227px; display: flex; flex-direction: column; gap: 10px; padding: 2px 19px 2px 0; }
.bpm { margin-top: auto; height: 19px; }
.bpmrow { display: grid; grid-template-columns: 95px 1fr 1fr; gap: 10px; margin-bottom: 34px; }
.bpmrow input { background: var(--panel); }
.three { display: grid; grid-template-columns: repeat(3, 1fr); gap: 9px; }
.gain { flex: 1; display: flex; flex-direction: column; align-items: center; border-left: 2px solid var(--line); padding: 0 0 2px 19px; }
.gain input[type=range] {
  writing-mode: vertical-lr;
  direction: rtl;
  width: 52px;
  height: 87px;
  margin: 12px 0 15px;
  background: linear-gradient(#000, #000) center / 4px 100% no-repeat;
}
.gain input[type=range]::-webkit-slider-thumb {
  appearance: none;
  width: 24px;
  height: 25px;
  margin-left: 28px;
  background: url("data:image/svg+xml,%3Csvg xmlns='http://www.w3.org/2000/svg' width='24' height='25'%3E%3Cpath d='M2 12.500 22 2v21z' fill='%23d4d4d4' stroke='%233f3f3f' stroke-width='2'/%3E%3C/svg%3E") no-repeat;
}
.pitch { margin: 4px 0 2px; }
.st { margin-top: -10px; }
.semis { display: flex; width: 116px; height: 30px; border: 2px solid var(--ink); }
.semis input { width: 50%; text-align: center; background: #d4d4d4; }
.semis input:last-child { background: #fff; }
.gain hr { width: 116px; margin: 10px 0; }
.rev { display: grid; grid-template-columns: 46px 60px; gap: 10px; }
.scroll { width: 17px; border-radius: 9px; background: #6b6b6b; }

.editor { flex: 1; min-width: 0; display: flex; flex-direction: column; border-top: 2px solid #333; }
.lane { height: 24px; background: var(--panel); border-left: 2px solid #333; border-bottom: 2px solid #333; }
.lane.l2 { height: 39px; border-bottom: 0; padding-top: 1px; }
.canvas { flex: 1; position: relative; background: var(--light); border-left: 2px solid #333; }
.canvas svg { position: absolute; width: 100%; height: 100%; }
.ruler { height: 35px; display: flex; background: var(--bg); }
.ruler span {
  flex: 0 0 15.48%;
  display: flex;
  gap: 1px;
  height: 35px;
  padding-top: 9px;
  line-height: 26px;
  color: #1e1e1e;
  background: repeating-linear-gradient(90deg, #666 0 2px, transparent 2px 20%) 0 0 / 100% 10px no-repeat;
}
.ruler span:last-child { flex: 1; background-size: 328px 10px; }
.ruler span::before { content: ""; width: 5px; height: 23px; margin-top: -9px; border: solid #555; border-width: 0 0 2px 2px; }

/* Status bar */
footer { display: flex; align-items: flex-end; gap: 19px; padding: 0 21px 0 17px; }
.cell { height: 51px; display: flex; align-items: center; }
.status { flex: 1; height: 51px; border: 7px solid var(--line); border-radius: 8px; background: var(--panel); }
.overview { width: 482px; height: 71px; padding: 27px 7px 7px 14px; background: var(--line); border-radius: 0 0 8px 8px; }
.overview svg { width: 100%; height: 37px; overflow: visible; }
.device { width: 311px; height: 51px; display: flex; align-items: center; justify-content: space-between; padding: 0 9px 0 10px; background: var(--line); border-radius: 8px; font-size: 24px; font-weight: 600; white-space: nowrap; }
```
